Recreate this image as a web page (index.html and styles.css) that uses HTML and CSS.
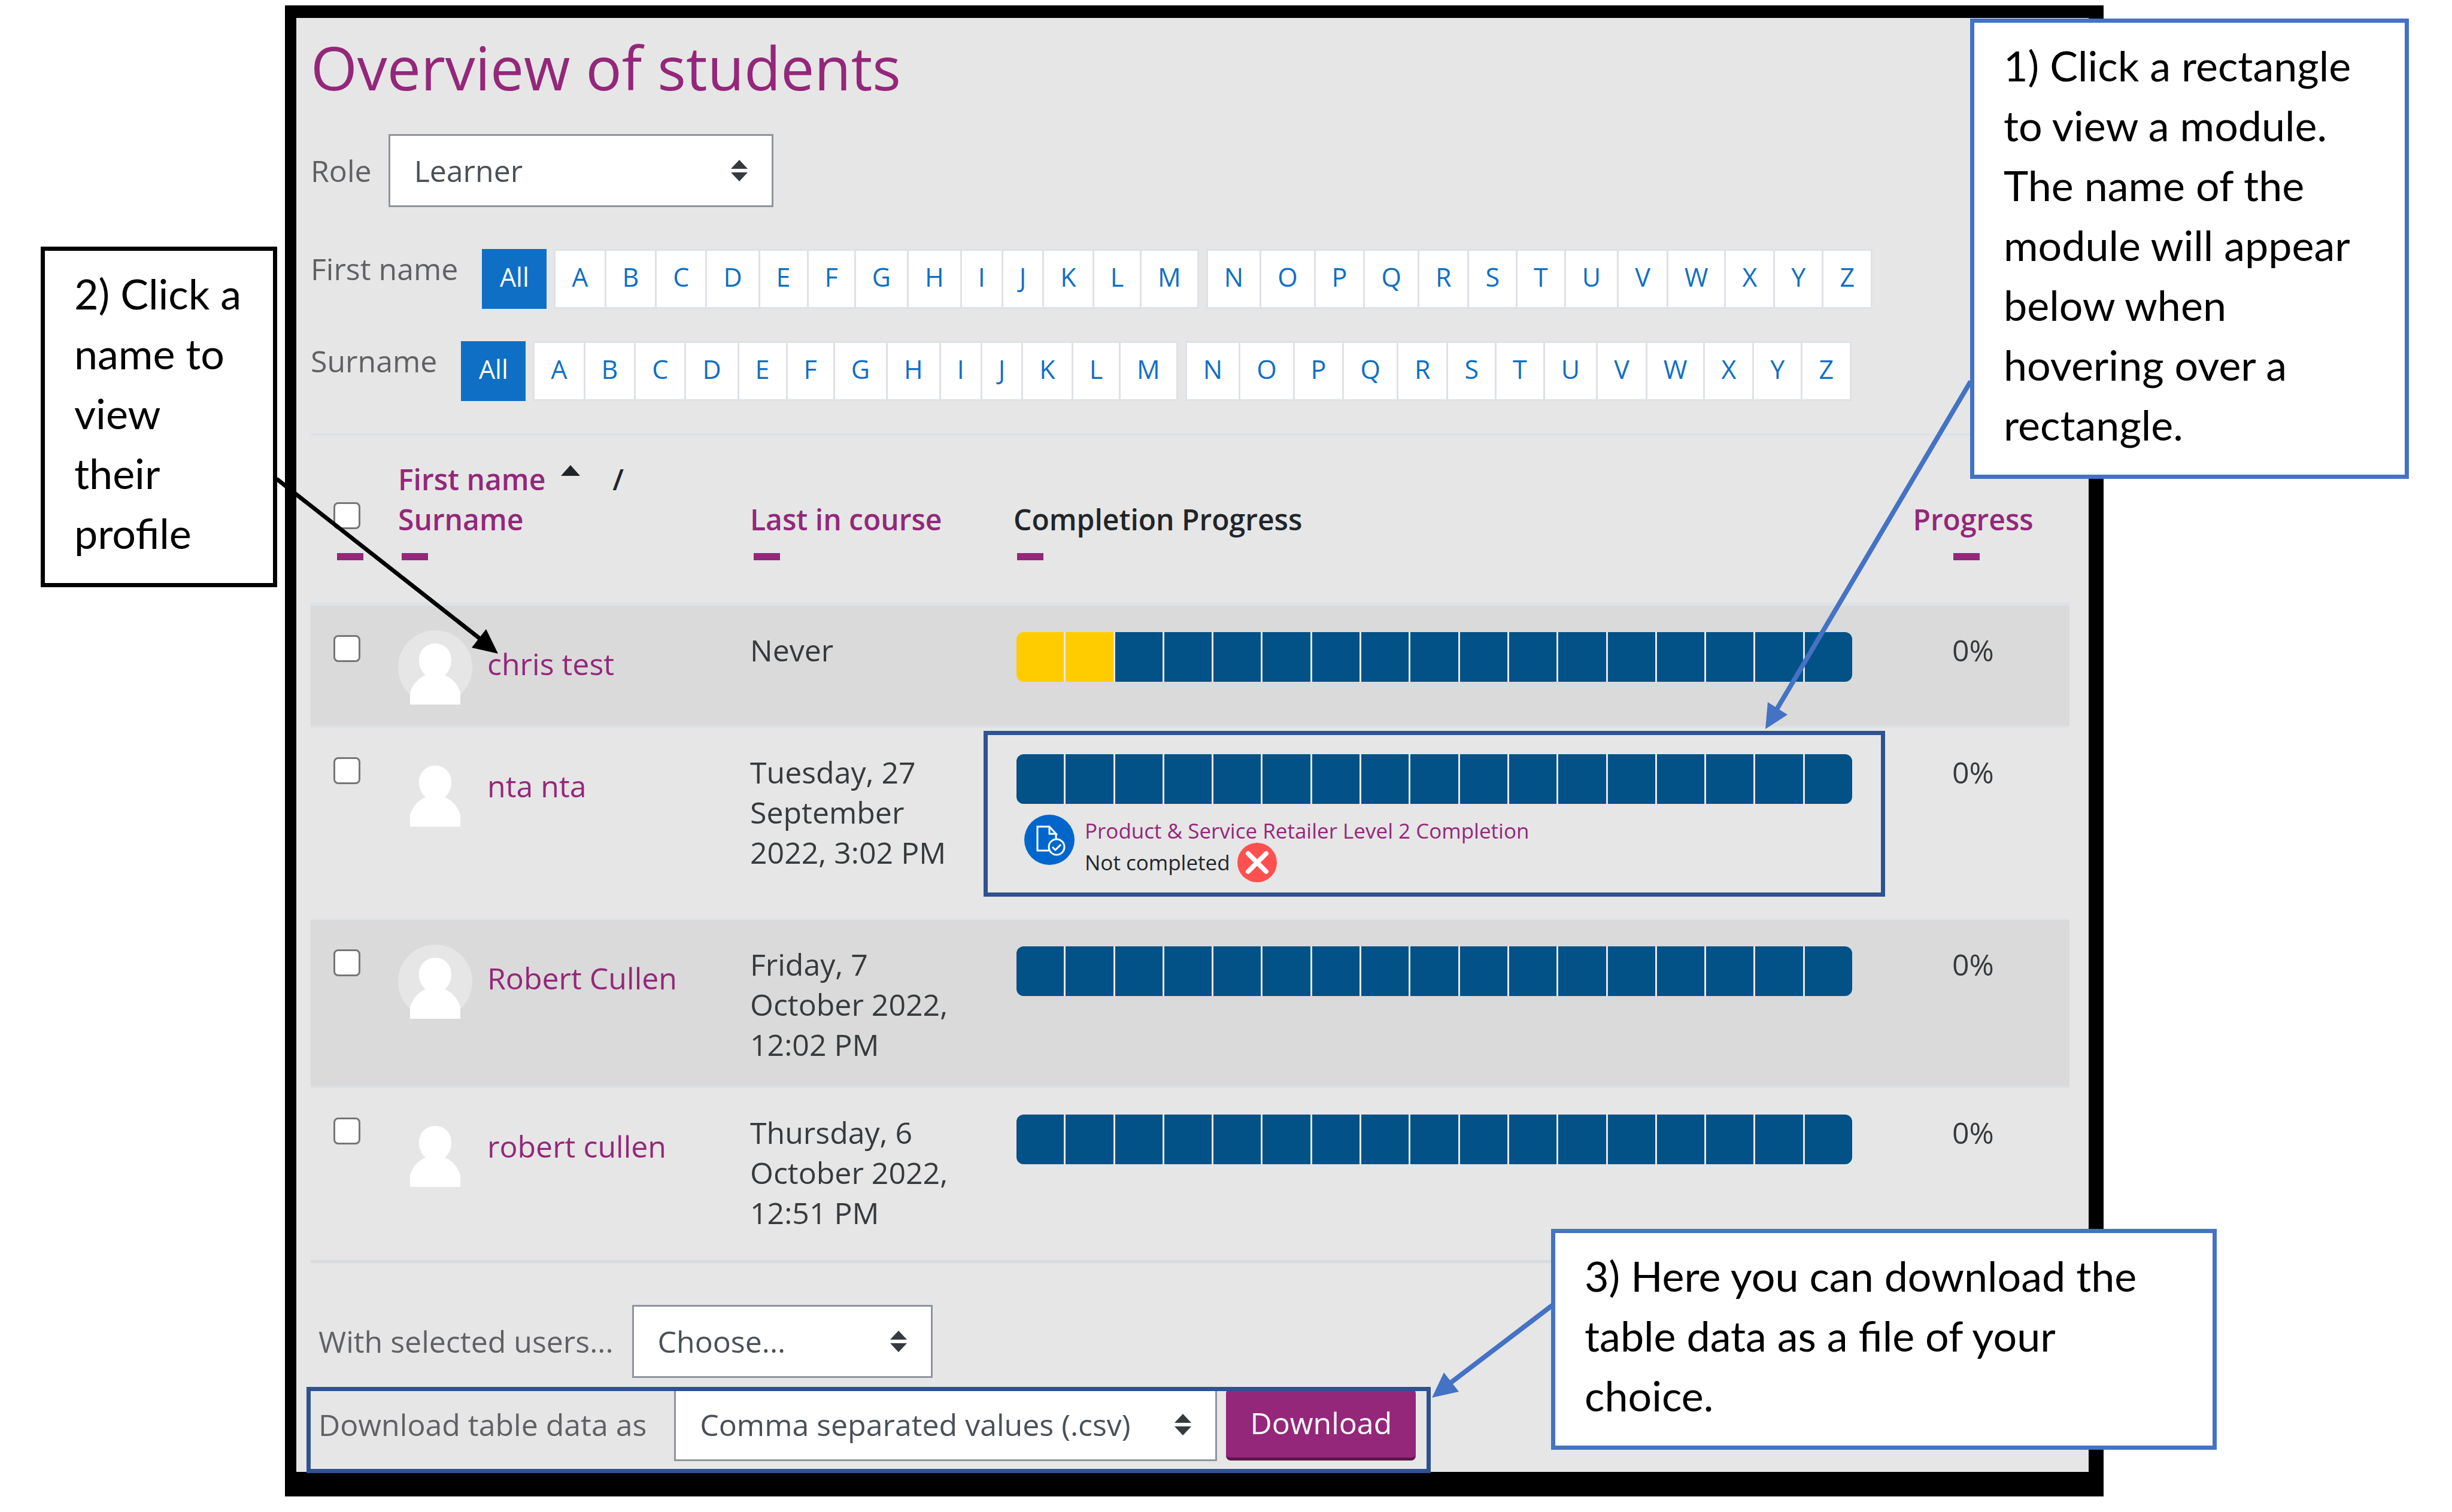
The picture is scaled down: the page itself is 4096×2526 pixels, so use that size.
FILE: index.html
```html
<!DOCTYPE html>
<html lang="en">
<head>
<meta charset="utf-8">
<title>Overview of students</title>
<link rel="stylesheet" href="styles.css">
<script src="page.js" defer></script>
</head>
<body>
<svg class="defs" aria-hidden="true">
  <symbol id="avatar" viewBox="0 0 124 124">
    <clipPath id="round"><circle cx="62" cy="62" r="62"/></clipPath>
    <circle cx="62" cy="62" r="62" fill="#e6e6e6"/>
    <g clip-path="url(#round)" fill="#fff">
      <path d="M62 22c-16 0-27 12-27 28 0 10 4 19 11 25-13 5-21 15-26 29v20h84v-20c-5-14-13-24-26-29 7-6 11-15 11-25 0-16-11-28-27-28z"/>
    </g>
  </symbol>
</svg>
<div class="page">
  <main class="panel">
    <h1 class="title">Overview of students</h1>

    <form class="role">
      <label for="role">Role</label>
      <select id="role" class="select select-role"><option>Learner</option></select>
    </form>

    <nav class="initials" aria-label="First name">
      <span class="initials-label">First name</span>
      <a class="all" href="#">All</a>
      <span class="letters" data-letters="ABCDEFGHIJKLM"></span>
      <span class="letters" data-letters="NOPQRSTUVWXYZ"></span>
    </nav>
    <nav class="initials" aria-label="Surname">
      <span class="initials-label">Surname</span>
      <a class="all" href="#">All</a>
      <span class="letters" data-letters="ABCDEFGHIJKLM"></span>
      <span class="letters" data-letters="NOPQRSTUVWXYZ"></span>
    </nav>

    <table class="students">
      <colgroup>
        <col class="col-check"><col class="col-name"><col class="col-date"><col><col class="col-progress">
      </colgroup>
      <thead>
        <tr>
          <th><input class="check" type="checkbox" aria-label="Select all"><span class="dash"></span></th>
          <th>
            <span class="sort"><a href="#">First name</a><svg class="caret" viewBox="0 0 32 18"><path d="M16 0l16 18H0z"/></svg><span>/</span></span>
            <a href="#">Surname</a><span class="dash"></span>
          </th>
          <th><a href="#">Last in course</a><span class="dash"></span></th>
          <th>Completion Progress<span class="dash"></span></th>
          <th class="center"><a href="#">Progress</a><span class="dash"></span></th>
        </tr>
      </thead>
      <tbody>
        <tr>
          <td><input class="check" type="checkbox" aria-label="Select chris test"></td>
          <td><svg class="avatar"><use href="#avatar"/></svg><a href="#">chris test</a></td>
          <td>Never</td>
          <td><div class="bar" data-due="2"></div></td>
          <td class="center">0%</td>
        </tr>
        <tr>
          <td><input class="check" type="checkbox" aria-label="Select nta nta"></td>
          <td><svg class="avatar"><use href="#avatar"/></svg><a href="#">nta nta</a></td>
          <td>Tuesday, 27 September 2022, 3:02 PM</td>
          <td class="marked">
            <div class="bar" data-due="0"></div>
            <div class="info">
              <svg class="module" viewBox="0 0 85 85">
                <circle cx="42" cy="42" r="42" fill="#06c"/>
                <g fill="none" stroke="#fff" stroke-width="3">
                  <path d="M41 60H22V20h20l11 12h-11V20M53 32v8"/>
                  <circle cx="54" cy="54" r="13"/>
                  <path d="M47 54l5 5 9-9"/>
                </g>
              </svg>
              <div class="info-text">
                <a href="#">Product &amp; Service Retailer Level 2 Completion</a>
                <div class="state">Not completed
                  <svg class="cross" viewBox="0 0 66 66"><circle cx="33" cy="33" r="33" fill="#ff5050"/><path d="M18 18l30 30M48 18L18 48" stroke="#fff" stroke-width="8" stroke-linecap="round"/></svg>
                </div>
              </div>
            </div>
            <span class="highlight highlight-module"></span>
          </td>
          <td class="center">0%</td>
        </tr>
        <tr>
          <td><input class="check" type="checkbox" aria-label="Select Robert Cullen"></td>
          <td><svg class="avatar"><use href="#avatar"/></svg><a href="#">Robert Cullen</a></td>
          <td>Friday, 7 October 2022, 12:02 PM</td>
          <td><div class="bar" data-due="0"></div></td>
          <td class="center">0%</td>
        </tr>
        <tr>
          <td><input class="check" type="checkbox" aria-label="Select robert cullen"></td>
          <td><svg class="avatar"><use href="#avatar"/></svg><a href="#">robert cullen</a></td>
          <td>Thursday, 6 October 2022, 12:51 PM</td>
          <td><div class="bar" data-due="0"></div></td>
          <td class="center">0%</td>
        </tr>
      </tbody>
    </table>

    <form class="action">
      <label for="bulk">With selected users...</label>
      <select id="bulk" class="select select-bulk"><option>Choose...</option></select>
    </form>
    <form class="action download">
      <label for="format">Download table data as</label>
      <select id="format" class="select select-format"><option>Comma separated values (.csv)</option></select>
      <button class="button" type="button">Download</button>
      <span class="highlight highlight-download"></span>
    </form>
  </main>

  <svg class="arrows" viewBox="0 0 4096 2526" aria-hidden="true">
    <g stroke="#4472c4" fill="#4472c4">
      <path d="M3292 637L2968 1185" stroke-width="8"/>
      <path d="M2949 1218l4-45 33 21z" stroke="none"/>
      <path d="M2594 2180L2422 2311" stroke-width="8"/>
      <path d="M2392 2335l20-42 25 32z" stroke="none"/>
    </g>
    <path d="M462 800L803 1068" stroke="#000" stroke-width="7"/>
    <path d="M832 1092l-20-41-24 31z"/>
  </svg>

  <p class="callout callout-module">1) Click a rectangle<br>to view a module.<br>The name of the<br>module will appear<br>below when<br>hovering over a<br>rectangle.</p>
  <p class="callout callout-profile">2) Click a<br>name to<br>view<br>their<br>profile</p>
  <p class="callout callout-download">3) Here you can download the<br>table data as a file of your<br>choice.</p>
</div>
</body>
</html>
```
FILE: styles.css
```css
* { box-sizing: border-box; }

body {
  margin: 0;
  background: #fff;
  color: #373a3c;
  font: 50px/67px "Open Sans", "Noto Sans", sans-serif;
}

a { color: #94277a; text-decoration: none; }

.defs { display: none; }

.page {
  position: relative;
  padding: 9px 582px 26px 476px;
}

.panel {
  padding: 22px 32px 18px 24px;
  border: solid #000;
  border-width: 21px 25px 41px 19px;
  background: #e6e6e6;
}

.title {
  margin: 0 0 52px;
  color: #94277a;
  font-size: 100px;
  font-weight: 400;
  line-height: 120px;
}

/* Form controls */

.role {
  display: flex;
  align-items: center;
  gap: 28px;
  margin-bottom: 70px;
  color: #606164;
}

.select {
  appearance: none;
  height: 122px;
  padding: 0 40px;
  border: 3px solid #8f959e;
  border-radius: 0;
  background: #fff url("data:image/svg+xml,%3Csvg xmlns='http://www.w3.org/2000/svg' viewBox='0 0 28 36'%3E%3Cpath fill='%23343a40' d='M14 0l14 15H0zM14 36L0 21h28z'/%3E%3C/svg%3E") no-repeat right 40px center / 28px 36px;
  color: #495057;
  font: inherit;
}

.select-role { width: 643px; }
.select-bulk { width: 502px; }
.select-format { width: 907px; }

/* Initials filter */

.initials {
  display: flex;
  height: 100px;
  margin-bottom: 54px;
}

.initials-label {
  margin-right: 40px;
  color: #606164;
}

.all,
.letters a {
  padding: 0 27px;
  font-size: 43px;
  line-height: 94px;
}

.all {
  width: 108px;
  padding: 0;
  background: #0f6fc5;
  color: #fff;
  font-weight: 500;
  text-align: center;
}

.letters {
  display: flex;
  margin-left: 12px;
  border: 3px solid #dee2e6;
  border-left: 0;
  height: 100px;
}

.letters a {
  height: 94px;
  border-left: 3px solid #dee2e6;
  background: #fff;
  color: #0f6fc5;
  line-height: 88px;
}

/* Students table */

.students {
  width: 100%;
  margin-top: 50px;
  border-collapse: collapse;
  border-spacing: 0;
  table-layout: fixed;
}

.col-check { width: 108px; }
.col-name { width: 588px; }
.col-date { width: 440px; }
.col-progress { width: 322px; }

.students th {
  padding: 39px 26px 70px 38px;
  border-top: 4px solid #dee2e6;
  border-bottom: 6px solid #dee2e6;
  color: #212529;
  font-size: 48px;
  font-weight: 600;
  text-align: left;
  vertical-align: bottom;
}

.students td {
  padding: 41px 26px 36px 38px;
  border-top: 3px solid #dee2e6;
  vertical-align: top;
}

.students tbody tr:first-child td { border-top: 0; }
.students tbody tr:last-child td {
  padding-bottom: 45px;
  border-bottom: 5px solid #d8dbde;
}
.students tbody tr:nth-child(odd) { background: #dadada; }

.students .center {
  padding-right: 0;
  padding-left: 0;
  text-align: center;
}

.sort {
  display: flex;
}

.caret {
  width: 32px;
  height: 18px;
  margin: 10px 54px 0 26px;
  fill: #212529;
}

.dash {
  display: block;
  width: 44px;
  height: 12px;
  margin: 23px 0 0 6px;
  background: #94277a;
}

.center .dash { margin-left: 128px; }

.check {
  appearance: none;
  display: block;
  width: 45px;
  height: 45px;
  margin: 8px 0 0;
  border: 3px solid #767676;
  border-radius: 8px;
  background: #fff;
}

.students th .check { margin-bottom: 40px; }

.avatar {
  width: 124px;
  height: 124px;
  margin-right: 25px;
  vertical-align: middle;
}

.bar {
  display: flex;
  gap: 3px;
  width: 1396px;
  height: 83px;
  margin: 3px 0 0 5px;
  border-radius: 12px;
  overflow: hidden;
  background: #e6e6e6;
}

.cell { flex: 1; background: #025187; }
.cell.due { background: #fc0; }

.marked { position: relative; }

.info {
  display: flex;
  gap: 16px;
  margin: 18px 0 0 18px;
  padding-bottom: 31px;
  color: #212529;
  font-size: 35px;
  line-height: 53px;
}

.module { width: 85px; height: 85px; }

.info-text {
  display: flex;
  flex-direction: column;
}

.state {
  display: flex;
  align-items: center;
  gap: 12px;
  height: 53px;
}

.cross { width: 66px; height: 66px; }

/* Actions under the table */

.action {
  position: relative;
  display: flex;
  align-items: center;
  width: fit-content;
  margin: 70px 0 0 13px;
  color: #606164;
}

.select-bulk { margin-left: 31px; }
.action.download { margin-top: 17px; }
.select-format { margin: 0 15px 0 46px; }

.button {
  width: 317px;
  height: 120px;
  padding: 0;
  border: 0;
  border-bottom: 5px solid #5a174a;
  border-radius: 8px;
  background: #94277a;
  color: #fff;
  font: inherit;
  font-weight: 500;
}

/* Guide annotations laid over the page */

.highlight {
  position: absolute;
  border: 7px solid #2f528f;
  pointer-events: none;
}

.highlight-module { inset: 5px -14px 36px -12px; }
.highlight-download { inset: -2px -25px -20px -20px; }

.arrows {
  position: absolute;
  top: 0;
  left: 0;
  width: 100%;
  pointer-events: none;
}

.callout {
  position: absolute;
  margin: 0;
  padding: 21px 0 34px 49px;
  border: 7px solid #4472c4;
  background: #fff;
  color: #000;
  font: 70px/100px Lato, sans-serif;
}

.callout-module { top: 31px; right: 72px; width: 733px; }
.callout-profile { top: 412px; left: 68px; width: 395px; border-color: #000; }
.callout-download { top: 2053px; right: 393px; width: 1112px; }
```
FILE: page.js
```js
// One link for each letter of the filter groups.
document.querySelectorAll('.letters').forEach(function (group) {
  group.dataset.letters.split('').forEach(function (letter) {
    var link = document.createElement('a');
    link.href = '#';
    link.textContent = letter;
    group.appendChild(link);
  });
});

// Seventeen modules per student; the first `due` ones are awaiting submission.
document.querySelectorAll('.bar').forEach(function (bar) {
  for (var i = 0; i < 17; i++) {
    var cell = document.createElement('span');
    cell.className = i < Number(bar.dataset.due) ? 'cell due' : 'cell';
    bar.appendChild(cell);
  }
});
```
